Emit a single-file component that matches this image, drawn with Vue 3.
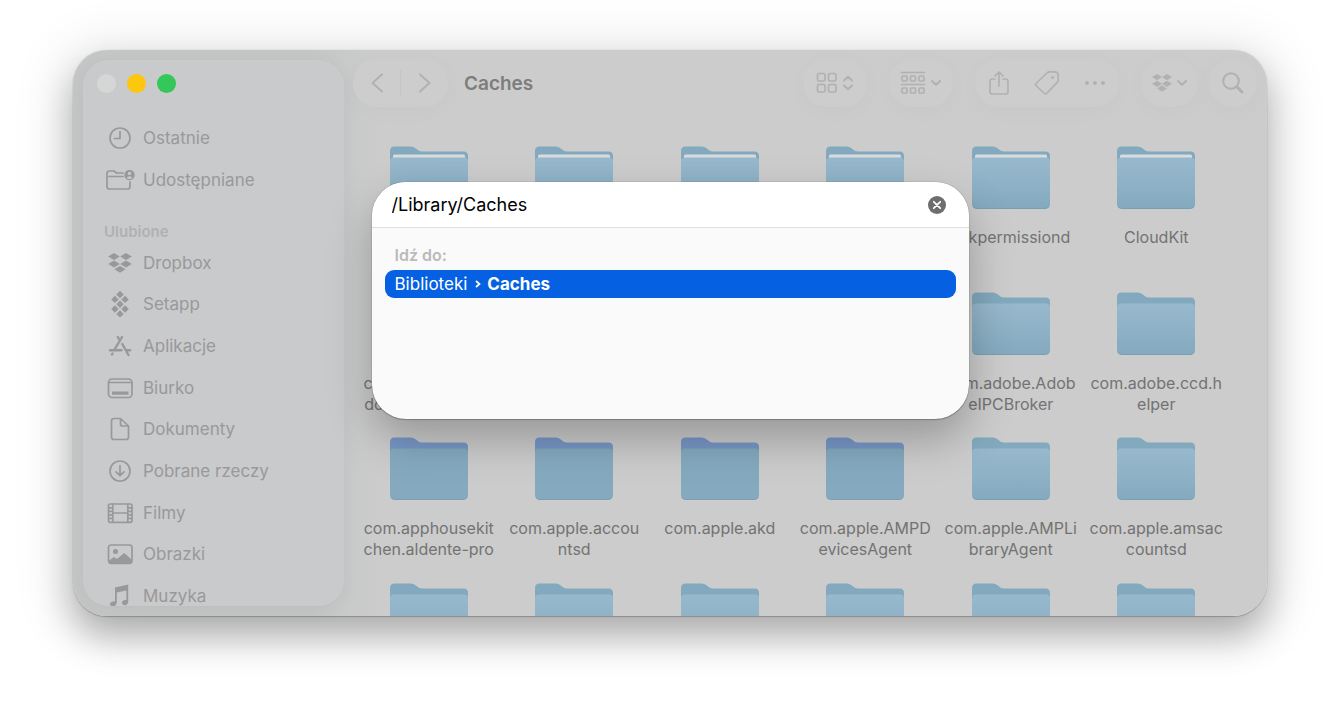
<script setup>
import { ref } from 'vue'

const path = ref('/Library/Caches')

const recents = [
  { icon: 'clock', label: 'Ostatnie' },
  { icon: 'shared', label: 'Udostępniane' },
]
const favourites = [
  { icon: 'dropbox', label: 'Dropbox' },
  { icon: 'setapp', label: 'Setapp' },
  { icon: 'apps', label: 'Aplikacje' },
  { icon: 'desktop', label: 'Biurko' },
  { icon: 'document', label: 'Dokumenty' },
  { icon: 'download', label: 'Pobrane rzeczy' },
  { icon: 'film', label: 'Filmy' },
  { icon: 'image', label: 'Obrazki' },
  { icon: 'music', label: 'Muzyka' },
]
const full = (...lines) => ({ lines, full: true })
const plain = (...lines) => ({ lines })
const shaded = (...lines) => ({ lines, shaded: true })
const folders = [
  full(), full(), full(), full(), full('askpermissiond'), full('CloudKit'),
  plain('com.adobe.accm', 'download-helper'), plain(), plain(), plain(),
  plain('com.adobe.Adob', 'eIPCBroker'), plain('com.adobe.ccd.h', 'elper'),
  shaded('com.apphousekit', 'chen.aldente-pro'), shaded('com.apple.accou', 'ntsd'),
  shaded('com.apple.akd'), shaded('com.apple.AMPD', 'evicesAgent'),
  plain('com.apple.AMPLi', 'braryAgent'), plain('com.apple.amsac', 'countsd'),
  plain(), plain(), plain(), plain(), plain(), plain(),
]
</script>

<template>
  <div class="page">
    <div class="window">
      <aside class="sidebar">
        <div class="lights">
          <button class="light close" aria-label="Zamknij"></button>
          <button class="light minimise" aria-label="Minimalizuj"></button>
          <button class="light zoom" aria-label="Powiększ"></button>
        </div>
        <nav class="places">
          <template v-for="(group, g) in [recents, favourites]" :key="g">
            <h2 v-if="g === 1" class="heading">Ulubione</h2>
            <ul :class="['list', g === 1 ? 'favourites' : 'recents']">
              <li v-for="item in group" :key="item.label">
                <a href="#" class="place">
                  <svg class="place-icon" viewBox="0 0 30 28" aria-hidden="true">
                    <g v-if="item.icon === 'clock'" class="line">
                      <circle cx="15" cy="14" r="10" />
                      <path d="M15 7.500V14.500H9.500" />
                    </g>
                    <g v-else-if="item.icon === 'shared'">
                      <g class="line">
                        <path d="M18 7H11.500L9 5H4.500Q2 5 2 7.500V20.500Q2 23 4.500 23H22.500Q25 23 25 20.500V16M4 10.500H18" />
                      </g>
                      <circle cx="24.500" cy="9" r="5.200" class="solid" />
                      <circle cx="24.500" cy="7.400" r="1.700" class="hole" />
                      <path d="M21.500 12Q24.500 8.600 27.500 12Q24.500 13.800 21.500 12Z" class="hole" />
                    </g>
                    <path v-else-if="item.icon === 'dropbox'" class="solid" d="M9 4l5.800 3.500-5.800 3.500-5.800-3.500zM21 4l5.800 3.500-5.800 3.500-5.800-3.500zM9 11.500l5.800 3.500-5.800 3.500-5.800-3.500zM21 11.500l5.800 3.500-5.800 3.500-5.800-3.500zM15 17l5.600 3.300-5.600 3.400-5.600-3.400z" />
                    <g v-else-if="item.icon === 'setapp'" class="solid">
                      <path d="M15 .8l3.700 3.700-3.700 3.700-3.700-3.700zM9.900 5.700l3.700 3.700-3.700 3.700-3.700-3.700zM20.100 5.700l3.700 3.700-3.700 3.700-3.700-3.700zM15 10.500l3.700 3.700-3.700 3.700-3.700-3.700zM9.900 15.300l3.700 3.700-3.700 3.700-3.700-3.700zM20.100 15.300l3.700 3.700-3.700 3.700-3.700-3.700zM15 20.200l3.700 3.700-3.700 3.700-3.700-3.700z" />
                    </g>
                    <g v-else-if="item.icon === 'apps'" class="bold-line">
                      <path d="M12.800 5L15 8.800M17 5L9.300 18M17.300 12L23.500 23M5 18.200H16.500M21 18.200H25.200M7 22.500L7.600 21.500" />
                    </g>
                    <g v-else-if="item.icon === 'desktop'">
                      <rect x="3.500" y="5" width="23.500" height="18.500" rx="3.500" class="line" />
                      <path d="M4 8.500H26.500" class="line" />
                      <rect x="7" y="17.500" width="16.500" height="3.200" class="solid" />
                    </g>
                    <g v-else-if="item.icon === 'document'" class="line">
                      <path d="M9 3.500H15.500L23.500 11V22Q23.500 24.500 21 24.500H9Q6.500 24.500 6.500 22V6Q6.500 3.500 9 3.500ZM15.500 4V9Q15.500 11 17.500 11H23" />
                    </g>
                    <g v-else-if="item.icon === 'download'" class="line">
                      <circle cx="15" cy="14" r="10" />
                      <path d="M15 8.500V18.500M11 14.800L15 18.700L19 14.800" />
                    </g>
                    <g v-else-if="item.icon === 'film'" class="line">
                      <rect x="3.500" y="5" width="23.500" height="18.300" rx="1.800" />
                      <path d="M7.800 5V23M22.800 5V23M7.800 14H22.800M4 8.800H7.800M4 12.300H7.800M4 15.900H7.800M4 19.400H7.800M22.800 8.800H26.500M22.800 12.300H26.500M22.800 15.900H26.500M22.800 19.400H26.500" />
                    </g>
                    <g v-else-if="item.icon === 'image'">
                      <rect x="3.500" y="5" width="23.500" height="18.300" rx="2.500" class="line" />
                      <circle cx="10.500" cy="11.500" r="2.500" class="solid" />
                      <path d="M4 20.500L9 17L12 19L18.500 13.500Q19.500 13 20.500 14L27 20V22Q27 23.500 25 23.500H6Q4 23.500 4 22Z" class="solid" />
                    </g>
                    <g v-else class="solid">
                      <path d="M10 5.500L23.200 2.500V20Q23 23 19.500 23.200Q16.500 23 17 20.300Q17.500 18 21.400 17.700V8.500L11.800 10.600V20.500Q11.500 24 8 24.300Q4.500 24 5 21.700Q5.500 19.500 10 19.200Z" />
                    </g>
                  </svg>
                  <span>{{ item.label }}</span>
                </a>
              </li>
            </ul>
          </template>
        </nav>
      </aside>

      <main class="main">
        <header class="toolbar">
          <div class="pill history">
            <button class="tool" aria-label="Wstecz">
              <svg width="14" height="20" viewBox="0 0 14 20" class="line thick"><path d="M12 1.500L2.500 10L12 18.500" /></svg>
            </button>
            <span class="divider"></span>
            <button class="tool" aria-label="Dalej">
              <svg width="14" height="20" viewBox="0 0 14 20" class="line thick"><path d="M2 1.500L11.500 10L2 18.500" /></svg>
            </button>
          </div>
          <h1 class="title">Caches</h1>
          <div class="tools">
            <button class="pill view" aria-label="Widok">
              <svg width="22" height="22" viewBox="0 0 22 22" class="line">
                <rect x="1.500" y="1.500" width="7.500" height="7.500" rx="1.500" /><rect x="12.500" y="1.500" width="7.500" height="7.500" rx="1.500" />
                <rect x="1.500" y="12.500" width="7.500" height="7.500" rx="1.500" /><rect x="12.500" y="12.500" width="7.500" height="7.500" rx="1.500" />
              </svg>
              <svg width="12" height="16" viewBox="0 0 12 16" class="line thick"><path d="M2 5.500L6 1.800L10 5.500M2 10.500L6 14.200L10 10.500" /></svg>
            </button>
            <button class="pill view" aria-label="Grupuj">
              <svg width="26" height="24" viewBox="0 0 26 24" class="line">
                <path d="M1.500 1.500H24.500M1.500 13.500H24.500" />
                <rect x="2" y="5" width="5" height="5" rx="1" /><rect x="10.500" y="5" width="5" height="5" rx="1" /><rect x="19" y="5" width="5" height="5" rx="1" />
                <rect x="2" y="17" width="5" height="5" rx="1" /><rect x="10.500" y="17" width="5" height="5" rx="1" /><rect x="19" y="17" width="5" height="5" rx="1" />
              </svg>
              <svg width="12" height="8" viewBox="0 0 12 8" class="line thick"><path d="M2 2L6 5.800L10 2" /></svg>
            </button>
            <div class="pill actions">
              <button class="tool" aria-label="Udostępnij">
                <svg width="22" height="26" viewBox="0 0 22 26" class="line"><path d="M7 9H4.500Q2 9 2 11.500V21.500Q2 24 4.500 24H17.500Q20 24 20 21.500V11.500Q20 9 17.500 9H15M11 16V2M7 6L11 2L15 6" /></svg>
              </button>
              <button class="tool" aria-label="Tagi">
                <svg width="26" height="26" viewBox="0 0 26 26" class="line"><path d="M2 13.500L13.500 2.500Q14.300 1.800 15.500 1.800H20.500Q24.200 1.800 24.200 5.500V10Q24.200 11.500 23.300 12.400L12.500 23.500Q11.500 24.500 10.500 23.500L2 15.500Q1 14.500 2 13.500Z" /><circle cx="18.500" cy="7.500" r=".6" /></svg>
              </button>
              <button class="tool" aria-label="Więcej">
                <svg width="22" height="6" viewBox="0 0 22 6" class="dots"><circle cx="3" cy="3" r="2" /><circle cx="11" cy="3" r="2" /><circle cx="19" cy="3" r="2" /></svg>
              </button>
            </div>
            <div class="last">
              <button class="pill box" aria-label="Dropbox">
                <svg width="20" height="18" viewBox="0 0 20 18" class="dots"><path d="M5 0l5 3.100-5 3.100-5-3.100zM15 0l5 3.100-5 3.100-5-3.100zM5 6.700l5 3.100-5 3.100-5-3.100zM15 6.700l5 3.100-5 3.100-5-3.100zM10 11.300l5 3.100-5 3.100-5-3.100z" /></svg>
                <svg width="12" height="8" viewBox="0 0 12 8" class="line thick"><path d="M2 2L6 5.800L10 2" /></svg>
              </button>
              <button class="pill search" aria-label="Szukaj">
                <svg width="24" height="24" viewBox="0 0 24 24" class="line thick"><circle cx="10" cy="10" r="7.800" /><path d="M15.800 15.800L21 21" class="handle" /></svg>
              </button>
            </div>
          </div>
        </header>

        <ul class="grid">
          <li v-for="(f, i) in folders" :key="i" class="item">
            <svg class="folder" width="78" height="63" viewBox="0 0 78 63" aria-hidden="true">
              <defs>
                <linearGradient :id="'front' + i" x1="0" y1="0" x2="0" y2="1">
                  <stop offset="0" stop-color="#98b9cd" />
                  <stop offset="1" stop-color="#84aabf" />
                </linearGradient>
              </defs>
              <path :class="['back', { shaded: f.shaded }]" d="M0 5Q0 .5 4.500 .5H21Q24 .5 26.500 3Q29 5.500 32 5.500H73.500Q78 5.500 78 10V30H0Z" />
              <rect v-if="f.full" x="3" y="8.500" width="72" height="6" rx="1.500" class="paper" />
              <path :fill="f.shaded ? '#85aabf' : `url(#front${i})`" d="M0 15.500Q0 11.500 4 11.500H74Q78 11.500 78 15.500V58Q78 62.500 73.500 62.500H4.500Q0 62.500 0 58Z" />
              <path class="base" d="M1.500 61Q3 62.500 5 62.500H73Q75 62.500 76.500 61" />
            </svg>
            <p class="name">
              <span v-for="line in f.lines" :key="line">{{ line }}</span>
            </p>
          </li>
        </ul>
      </main>

      <form class="dialog" role="dialog" aria-label="Idź do folderu" @submit.prevent>
        <div class="field">
          <input v-model="path" type="text" aria-label="Ścieżka" class="path" />
          <button type="button" class="clear" aria-label="Wyczyść">
            <svg width="18" height="18" viewBox="0 0 18 18"><circle cx="9" cy="9" r="9" /><path d="M5.800 5.800L12.200 12.200M12.200 5.800L5.800 12.200" /></svg>
          </button>
        </div>
        <div class="results">
          <h2 class="goto">Idź do:</h2>
          <button type="button" class="result">
            <span>Biblioteki</span>
            <svg width="6" height="10" viewBox="0 0 6 10"><path d="M1 2L4.500 5L1 8" /></svg>
            <strong>Caches</strong>
          </button>
        </div>
      </form>
    </div>
  </div>
</template>

<style>
body {
  background: #fff;
}
</style>

<style scoped>
* {
  box-sizing: border-box;
}
.page {
  padding: 50px 73px 0;
  font-family: Inter, "Liberation Sans", sans-serif;
  height: 100vh;
  overflow: hidden;
}
button {
  border: 0;
  padding: 0;
  background: none;
  font: inherit;
  color: inherit;
}
h1, h2, ul, p {
  margin: 0;
  padding: 0;
  list-style: none;
}
svg {
  display: block;
  flex: none;
}
.window {
  position: relative;
  display: flex;
  height: calc(100vh - 146px);
  border-radius: 34px;
  background: linear-gradient(to right, #c5c7c7 20%, #cccccc 26%);
  box-shadow: 0 0 1px rgba(0, 0, 0, 0.3), 0 1px 1px rgba(0, 0, 0, 0.2),
    0 20px 36px rgba(0, 0, 0, 0.28), 0 6px 50px 16px rgba(0, 0, 0, 0.08);
}
.sidebar {
  width: 261px;
  flex: none;
  margin: 10px 0 10px 10px;
  border-radius: 26px;
  background: #c9cacc;
  overflow: hidden;
  display: flex;
  flex-direction: column;
  box-shadow: 0 4px 20px rgba(0, 0, 0, 0.05);
}
.lights {
  display: flex;
  gap: 11px;
  padding: 14px 14px 24px;
}
.light {
  width: 19px;
  height: 19px;
  border-radius: 50%;
}
.close {
  background: #d5d7d6;
}
.minimise {
  background: #fdc60f;
}
.zoom {
  background: #34c759;
}
.places {
  flex: 1;
  display: flex;
  flex-direction: column;
  margin-bottom: -11px;
}
.list {
  display: grid;
}
.recents {
  grid-auto-rows: 42px;
}
.favourites {
  flex: 1;
  grid-auto-rows: 1fr;
}
.heading {
  padding: 21px 21px 0;
  font-size: 15px;
  line-height: 20px;
  font-weight: 600;
  color: #b0b1b2;
}
.place {
  display: flex;
  align-items: center;
  gap: 8px;
  height: 100%;
  padding-left: 22px;
  font-size: 17px;
  line-height: 22px;
  color: #989999;
  text-decoration: none;
}
.place-icon {
  width: 30px;
  height: 28px;
  overflow: visible;
}
.line {
  fill: none;
  stroke: #989999;
  stroke-width: 1.7;
  stroke-linecap: round;
  stroke-linejoin: round;
}
.bold-line {
  fill: none;
  stroke: #989999;
  stroke-width: 2.4;
  stroke-linecap: round;
}
.solid {
  fill: #989999;
}
.hole {
  fill: #c9cacc;
}
.main {
  flex: 1;
  min-width: 0;
  overflow: hidden;
  border-radius: 0 34px 34px 0;
  display: flex;
  flex-direction: column;
}
.toolbar {
  display: flex;
  align-items: center;
  flex: none;
  height: 66px;
  padding: 0 10px 0 9px;
}
.pill {
  display: flex;
  align-items: center;
  justify-content: center;
  height: 48px;
  border-radius: 24px;
  background: #cdcdcd;
  box-shadow: 0 4px 24px rgba(0, 0, 0, 0.025);
}
.toolbar .line {
  stroke: #b0b1b1;
}
.toolbar .thick {
  stroke-width: 2;
}
.toolbar .handle {
  stroke-width: 3;
}
.dots {
  fill: #b0b1b1;
}
.history {
  width: 95px;
}
.history .tool {
  flex: 1;
  display: flex;
  justify-content: center;
}
.divider {
  width: 1px;
  height: 26px;
  background: #c5c5c5;
}
.title {
  padding-top: 2px;
  margin-left: 16px;
  font-size: 19px;
  line-height: 24px;
  font-weight: 600;
  color: #7d7d7d;
}
.tools {
  display: flex;
  gap: 22px;
  margin-left: auto;
}
.view {
  width: 64px;
  gap: 4px;
}
.actions {
  width: 144px;
  justify-content: space-between;
  padding: 0 13px;
}
.last {
  display: flex;
  gap: 11px;
}
.box {
  width: 57px;
  gap: 4px;
}
.search {
  width: 48px;
}
.grid {
  display: grid;
  grid-template-columns: repeat(6, 1fr);
  padding: 30px 38px 0 12px;
}
.item {
  display: flex;
  flex-direction: column;
  align-items: center;
  aspect-ratio: 1;
  min-width: 0;
}
.back {
  fill: #82a9bd;
}
.back.shaded {
  fill: #7898c8;
}
.paper {
  fill: #d9dcdd;
}
.base {
  fill: none;
  stroke: #7b9fb2;
}
.name {
  margin-top: 18px;
  font-size: 16px;
  line-height: 21px;
  color: #737373;
  text-align: center;
}
.name span {
  display: block;
  white-space: nowrap;
}
.dialog {
  position: absolute;
  top: 132px;
  left: 25%;
  width: 50%;
  height: 237px;
  border-radius: 34px;
  background: #fafafa;
  overflow: hidden;
  box-shadow: 0 0 1px rgba(0, 0, 0, 0.6), 0 1px 1px rgba(0, 0, 0, 0.2),
    0 20px 44px rgba(0, 0, 0, 0.26);
}
.field {
  display: flex;
  align-items: center;
  height: 46px;
  padding: 1px 23px 0 20px;
  background: #fff;
  border-bottom: 1px solid #dedede;
}
.path {
  flex: 1;
  min-width: 0;
  border: 0;
  padding: 0;
  outline: 0;
  background: none;
  font: 18px/24px Inter, "Liberation Sans", sans-serif;
  color: #000;
}
.clear circle {
  fill: #6e6e6e;
}
.clear path {
  stroke: #fff;
  stroke-width: 1.8;
  stroke-linecap: round;
}
.results {
  padding: 16px 13px;
}
.goto {
  padding-left: 10px;
  font-size: 16px;
  line-height: 22px;
  font-weight: 600;
  color: #bababa;
}
.result {
  display: flex;
  align-items: center;
  width: 100%;
  height: 28px;
  margin-top: 4px;
  padding-left: 10px;
  border-radius: 9px;
  background: #0561e2;
  color: #fff;
  font-size: 17px;
  line-height: 22px;
}
.result svg {
  margin: 0 6px 0 8px;
}
.result path {
  fill: none;
  stroke: #fff;
  stroke-width: 1.7;
}
</style>
